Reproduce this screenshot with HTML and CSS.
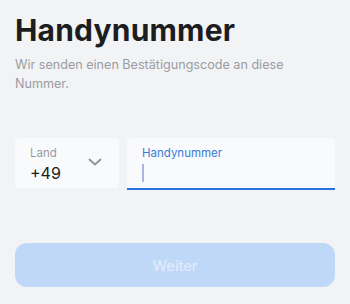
FILE: index.html
```html
<!DOCTYPE html>
<html lang="de">
<head>
<meta charset="utf-8">
<link rel="stylesheet" href="styles.css">
</head>
<body>
<main class="screen">
  <h1 class="title">Handynummer</h1>
  <p class="subtitle">Wir senden einen Bestätigungscode an diese Nummer.</p>
  <div class="fields">
    <div class="country">
      <div class="country-text">
        <span class="label">Land</span>
        <span class="value">+49</span>
      </div>
      <svg class="chevron" width="14" height="8" viewBox="0 0 14 8"><path d="M1.5 1.5 L7 6.5 L12.5 1.5" fill="none" stroke="#8e9197" stroke-width="1.8" stroke-linecap="round" stroke-linejoin="round"/></svg>
    </div>
    <div class="phone">
      <span class="label label-active">Handynummer</span>
      <span class="cursor"></span>
    </div>
  </div>
  <button class="submit" disabled>Weiter</button>
</main>
</body>
</html>
```
FILE: styles.css
```css
html, body {
  margin: 0;
  padding: 0;
  background: #f2f3f5;
}
body {
  font-family: Inter, "Noto Sans", sans-serif;
  width: 350px;
  height: 304px;
  overflow: hidden;
}
.screen {
  padding: 12px 15px 0 15px;
  display: flex;
  flex-direction: column;
}
.title {
  margin: 0;
  font-size: 30px;
  font-weight: 700;
  line-height: 36px;
  color: #1c1d20;
  letter-spacing: 0.2px;
}
.subtitle {
  margin: 7px 0 0 0;
  width: 280px;
  font-size: 12.6px;
  line-height: 19px;
  color: #9a9ca2;
}
.fields {
  margin-top: 45px;
  display: flex;
  gap: 8px;
  height: 50px;
}
.country {
  width: 104px;
  background: #f9fafb;
  border-radius: 4px;
  display: flex;
  align-items: center;
  justify-content: space-between;
  padding: 0 17px 0 15px;
  box-sizing: border-box;
}
.country-text {
  display: flex;
  flex-direction: column;
  padding-top: 3px;
}
.label {
  font-size: 11.5px;
  line-height: 14px;
  color: #999ba1;
}
.label-active {
  color: #3a7bd9;
}
.value {
  font-size: 16px;
  line-height: 22px;
  color: #1c1d20;
  margin-top: 2px;
}
.chevron {
  margin-top: -3px;
}
.phone {
  flex: 1;
  background: #f9fafb;
  border-radius: 4px 4px 0 0;
  border-bottom: 2px solid #2673dd;
  display: flex;
  flex-direction: column;
  padding: 8px 0 0 15px;
  box-sizing: border-box;
  height: 52px;
}
.cursor {
  width: 2px;
  height: 18px;
  background: #aab6e2;
  margin-top: 4px;
}
.submit {
  margin-top: 55px;
  height: 44px;
  width: 320px;
  border: none;
  border-radius: 12px;
  background: #c0d8f8;
  color: #dfeafb;
  font-family: Inter, "Noto Sans", sans-serif;
  font-size: 14.5px;
  font-weight: 500;
}
```
